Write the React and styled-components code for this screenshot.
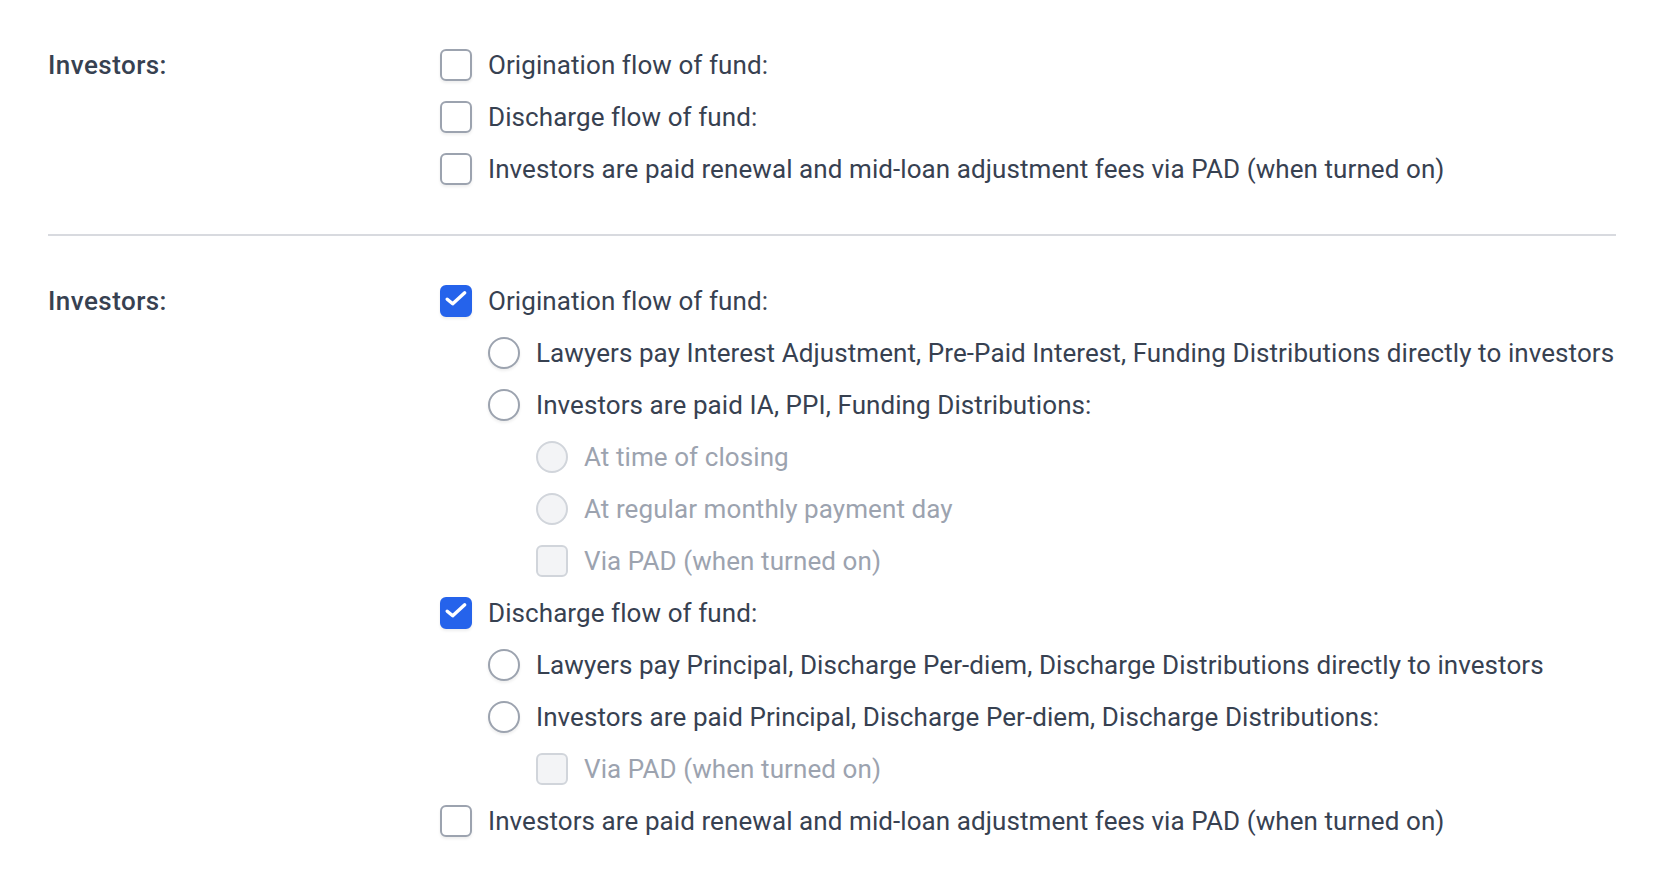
import React from "react";
import styled, { createGlobalStyle, css } from "styled-components";

const GlobalStyle = createGlobalStyle`
  html, body { margin: 0; padding: 0; background: #ffffff; }
  body { font-family: Roboto, "Liberation Sans", Arial, sans-serif; -webkit-font-smoothing: antialiased; }
  * { box-sizing: border-box; }
`;

const Page = styled.div`
  padding: 0 48px;
`;

const Section = styled.section`
  display: grid;
  grid-template-columns: 392px 1fr;
  padding: 49px 0;
  ${(p) => p.$divider && css`border-bottom: 2px solid #d8dadf;`}
`;

const SectionLabel = styled.div`
  font-size: 26px;
  line-height: 32px;
  font-weight: 500;
  color: #374151;
  letter-spacing: 0.45px;
`;

const OptionList = styled.div`
  display: flex;
  flex-direction: column;
  gap: 20px;
`;

const OptionRow = styled.label`
  display: flex;
  align-items: center;
  gap: 16px;
  height: 32px;
  padding-left: ${(p) => p.$level * 48}px;
`;

const OptionText = styled.span`
  font-size: 26px;
  line-height: 32px;
  letter-spacing: 0.08px;
  color: ${(p) => (p.$disabled ? "#9ca3af" : "#374151")};
  white-space: nowrap;
`;

const Box = styled.span`
  flex: none;
  width: 32px;
  height: 32px;
  border-radius: ${(p) => (p.$round ? "50%" : "6px")};
  display: flex;
  align-items: center;
  justify-content: center;
  border: 2px solid #9ca3af;
  background: #ffffff;
  box-shadow: 0 2px 3px rgba(0, 0, 0, 0.07);
  ${(p) =>
    p.$checked &&
    css`
      background: #2563eb;
      border-color: #2563eb;
    `}
  ${(p) =>
    p.$disabled &&
    css`
      background: #f3f4f6;
      border-color: #d1d5db;
      box-shadow: none;
    `}
`;

const CheckIcon = () => (
  <svg width="28" height="28" viewBox="0 0 28 28" fill="none" aria-hidden="true">
    <path
      d="M5.2 12.2l5.5 4.6 12-11"
      stroke="#ffffff"
      strokeWidth="3.4"
      strokeLinecap="round"
      strokeLinejoin="round"
    />
  </svg>
);

function Option({ type = "checkbox", level = 0, checked, disabled, children }) {
  return (
    <OptionRow $level={level}>
      <Box $round={type === "radio"} $checked={checked} $disabled={disabled}>
        {checked && <CheckIcon />}
      </Box>
      <OptionText $disabled={disabled}>{children}</OptionText>
    </OptionRow>
  );
}

export default function App() {
  return (
    <>
      <GlobalStyle />
      <Page>
        <Section $divider>
          <SectionLabel>Investors:</SectionLabel>
          <OptionList>
            <Option>Origination flow of fund:</Option>
            <Option>Discharge flow of fund:</Option>
            <Option>Investors are paid renewal and mid-loan adjustment fees via PAD (when turned on)</Option>
          </OptionList>
        </Section>
        <Section>
          <SectionLabel>Investors:</SectionLabel>
          <OptionList>
            <Option checked>Origination flow of fund:</Option>
            <Option type="radio" level={1}>
              Lawyers pay Interest Adjustment, Pre-Paid Interest, Funding Distributions directly to investors
            </Option>
            <Option type="radio" level={1}>Investors are paid IA, PPI, Funding Distributions:</Option>
            <Option type="radio" level={2} disabled>At time of closing</Option>
            <Option type="radio" level={2} disabled>At regular monthly payment day</Option>
            <Option level={2} disabled>Via PAD (when turned on)</Option>
            <Option checked>Discharge flow of fund:</Option>
            <Option type="radio" level={1}>
              Lawyers pay Principal, Discharge Per-diem, Discharge Distributions directly to investors
            </Option>
            <Option type="radio" level={1}>
              Investors are paid Principal, Discharge Per-diem, Discharge Distributions:
            </Option>
            <Option level={2} disabled>Via PAD (when turned on)</Option>
            <Option>Investors are paid renewal and mid-loan adjustment fees via PAD (when turned on)</Option>
          </OptionList>
        </Section>
      </Page>
    </>
  );
}
